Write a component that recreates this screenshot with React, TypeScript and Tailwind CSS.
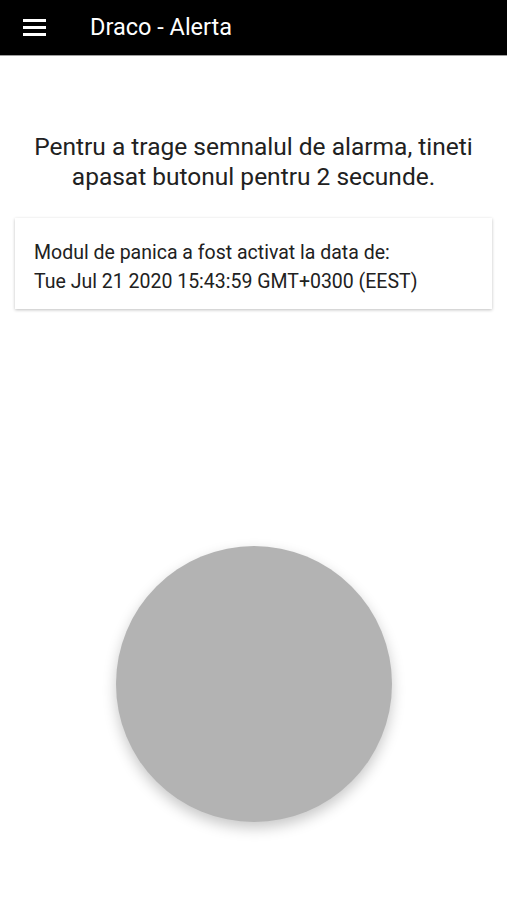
import React from "react";

export default function App() {
  return (
    <div className="w-[507px] h-[900px] bg-white flex flex-col" style={{ fontFamily: "Roboto, 'Liberation Sans', sans-serif" }}>
      <div className="h-[56px] bg-black flex items-center border-b border-[#9e9e9e]">
        <div className="w-[23px] ml-[23px] flex flex-col gap-[4px]">
          <div className="h-[3px] bg-white" />
          <div className="h-[3px] bg-white" />
          <div className="h-[3px] bg-white" />
        </div>
        <div className="ml-[44px] text-white text-[23.5px] leading-none">Draco - Alerta</div>
      </div>
      <div className="mt-[76px] text-center text-[24.5px] leading-[30px] text-[#212121] px-2">
        Pentru a trage semnalul de alarma, tineti<br />apasat butonul pentru 2 secunde.
      </div>
      <div className="mx-[15px] mt-[26px] h-[91px] bg-white shadow-[0_1px_3px_rgba(0,0,0,0.25)] pl-[19px] pt-[20px] text-[19.5px] leading-[29px] text-[#212121]">
        Modul de panica a fost activat la data de:<br />Tue Jul 21 2020 15:43:59 GMT+0300 (EEST)
      </div>
      <div className="flex justify-center mt-[237px]">
        <div className="w-[276px] h-[276px] rounded-full bg-[#b3b3b3] shadow-[0_6px_14px_rgba(0,0,0,0.22)]" />
      </div>
    </div>
  );
}
